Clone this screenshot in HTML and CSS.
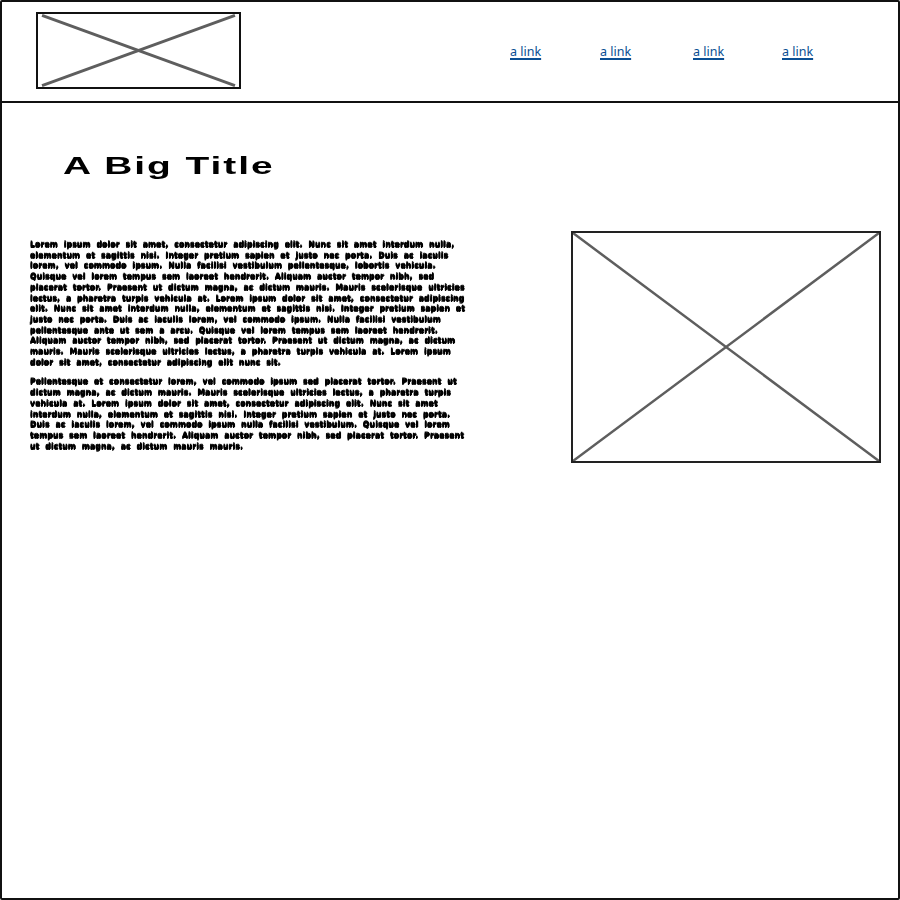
FILE: index.html
```html
<!DOCTYPE html>
<html lang="en">
<head>
  <meta charset="UTF-8" />
  <title>Wireframe</title>
  <link rel="stylesheet" href="styles.css">
</head>
<body>
  <div class="frame">

    <!-- Header -->
    <div class="header">
      <div class="logo">
        <svg class="placeholder" viewBox="0 0 100 100" preserveAspectRatio="none">
          <line x1="2" y1="2" x2="98" y2="98" />
          <line x1="2" y1="98" x2="98" y2="2" />
        </svg>
      </div>
      <nav class="nav">
        <a href="#">a link</a>
        <a href="#">a link</a>
        <a href="#">a link</a>
        <a href="#">a link</a>
      </nav>
    </div>

    <!-- Main content -->
    <div class="content">
      <h1>A Big Title</h1>

      <div class="columns">
        <div class="text">
          <p>Lorem ipsum dolor sit amet, consectetur adipiscing elit. Nunc sit amet interdum nulla, elementum et sagittis nisi. Integer pretium sapien et justo nec porta. Duis ac iaculis lorem, vel commodo ipsum. Nulla facilisi vestibulum pellentesque, lobortis vehicula. Quisque vel lorem tempus sem laoreet hendrerit. Aliquam auctor tempor nibh, sed placerat tortor. Praesent ut dictum magna, ac dictum mauris. Mauris scelerisque ultricies lectus, a pharetra turpis vehicula at. Lorem ipsum dolor sit amet, consectetur adipiscing elit. Nunc sit amet interdum nulla, elementum et sagittis nisi. Integer pretium sapien et justo nec porta. Duis ac iaculis lorem, vel commodo ipsum. Nulla facilisi vestibulum pellentesque ante ut sem a arcu. Quisque vel lorem tempus sem laoreet hendrerit. Aliquam auctor tempor nibh, sed placerat tortor. Praesent ut dictum magna, ac dictum mauris. Mauris scelerisque ultricies lectus, a pharetra turpis vehicula at. Lorem ipsum dolor sit amet, consectetur adipiscing elit nunc sit.</p>
          <p>Pellentesque et consectetur lorem, vel commodo ipsum sed placerat tortor. Praesent ut dictum magna, ac dictum mauris. Mauris scelerisque ultricies lectus, a pharetra turpis vehicula at. Lorem ipsum dolor sit amet, consectetur adipiscing elit. Nunc sit amet interdum nulla, elementum et sagittis nisi. Integer pretium sapien et justo nec porta. Duis ac iaculis lorem, vel commodo ipsum nulla facilisi vestibulum. Quisque vel lorem tempus sem laoreet hendrerit. Aliquam auctor tempor nibh, sed placerat tortor. Praesent ut dictum magna, ac dictum mauris mauris.</p>
        </div>

        <div class="picture">
          <svg class="placeholder" viewBox="0 0 100 100" preserveAspectRatio="none">
            <line x1="0" y1="0" x2="100" y2="100" />
            <line x1="0" y1="100" x2="100" y2="0" />
          </svg>
        </div>
      </div>
    </div>

  </div>
</body>
</html>
```

FILE: styles.css
```css
/* Base styles */
* {
  margin: 0;
  padding: 0;
  box-sizing: border-box;
}

body {
  background-color: #ffffff;
  font-family: "Liberation Sans", Arial, sans-serif;
  color: #000000;
  overflow: hidden;
}

.frame {
  width: 900px;
  height: 900px;
  border: 2px solid #111;
  border-radius: 2px;
  display: flex;
  flex-direction: column;
}

/* Header */
.header {
  height: 101px;
  border-bottom: 2px solid #111;
  display: flex;
  align-items: center;
  padding: 0 0 0 34px;
}

.logo {
  width: 205px;
  height: 77px;
  border: 2px solid #111;
  margin-top: -2px;
}

.placeholder {
  display: block;
  width: 100%;
  height: 100%;
}

.placeholder line {
  stroke: #5e5e5e;
  stroke-width: 3px;
  vector-effect: non-scaling-stroke;
}

.picture .placeholder line {
  stroke-width: 2.5px;
}

.nav {
  display: flex;
  margin-left: 269px;
  margin-top: -1px;
}

.nav a {
  font-family: "Noto Sans", sans-serif;
  font-size: 12.5px;
  color: #0b4f93;
  text-decoration: underline;
  text-underline-offset: 2px;
  text-decoration-thickness: 1.5px;
}

.nav a:nth-child(1) { width: 90px; }
.nav a:nth-child(2) { width: 93px; }
.nav a:nth-child(3) { width: 89px; }

/* Main content */
.content {
  padding: 48px 17px 0 28px;
}

h1 {
  width: fit-content;
  font-family: "Liberation Sans", Arial, sans-serif;
  font-size: 24px;
  font-weight: bold;
  letter-spacing: 1.2px;
  margin-left: 33px;
  transform: scaleX(1.62);
  transform-origin: left center;
  line-height: 30px;
}

.columns {
  display: flex;
  justify-content: space-between;
  align-items: flex-start;
  margin-top: 59px;
}

.text {
  width: 440px;
  font-family: "DejaVu Sans", sans-serif;
  font-size: 7.6px;
  font-weight: bold;
  line-height: 10.7px;
  letter-spacing: 0.2px;
  word-spacing: 3px;
  filter: blur(0.6px);
  text-shadow: 0 0.6px 0 #000, 0 -0.6px 0 #000, 0.6px 0 0 #000;
}

.text p + p {
  margin-top: 9px;
}

.picture {
  width: 310px;
  height: 232px;
  border: 2px solid #222;
  margin-top: -9px;
}
```
